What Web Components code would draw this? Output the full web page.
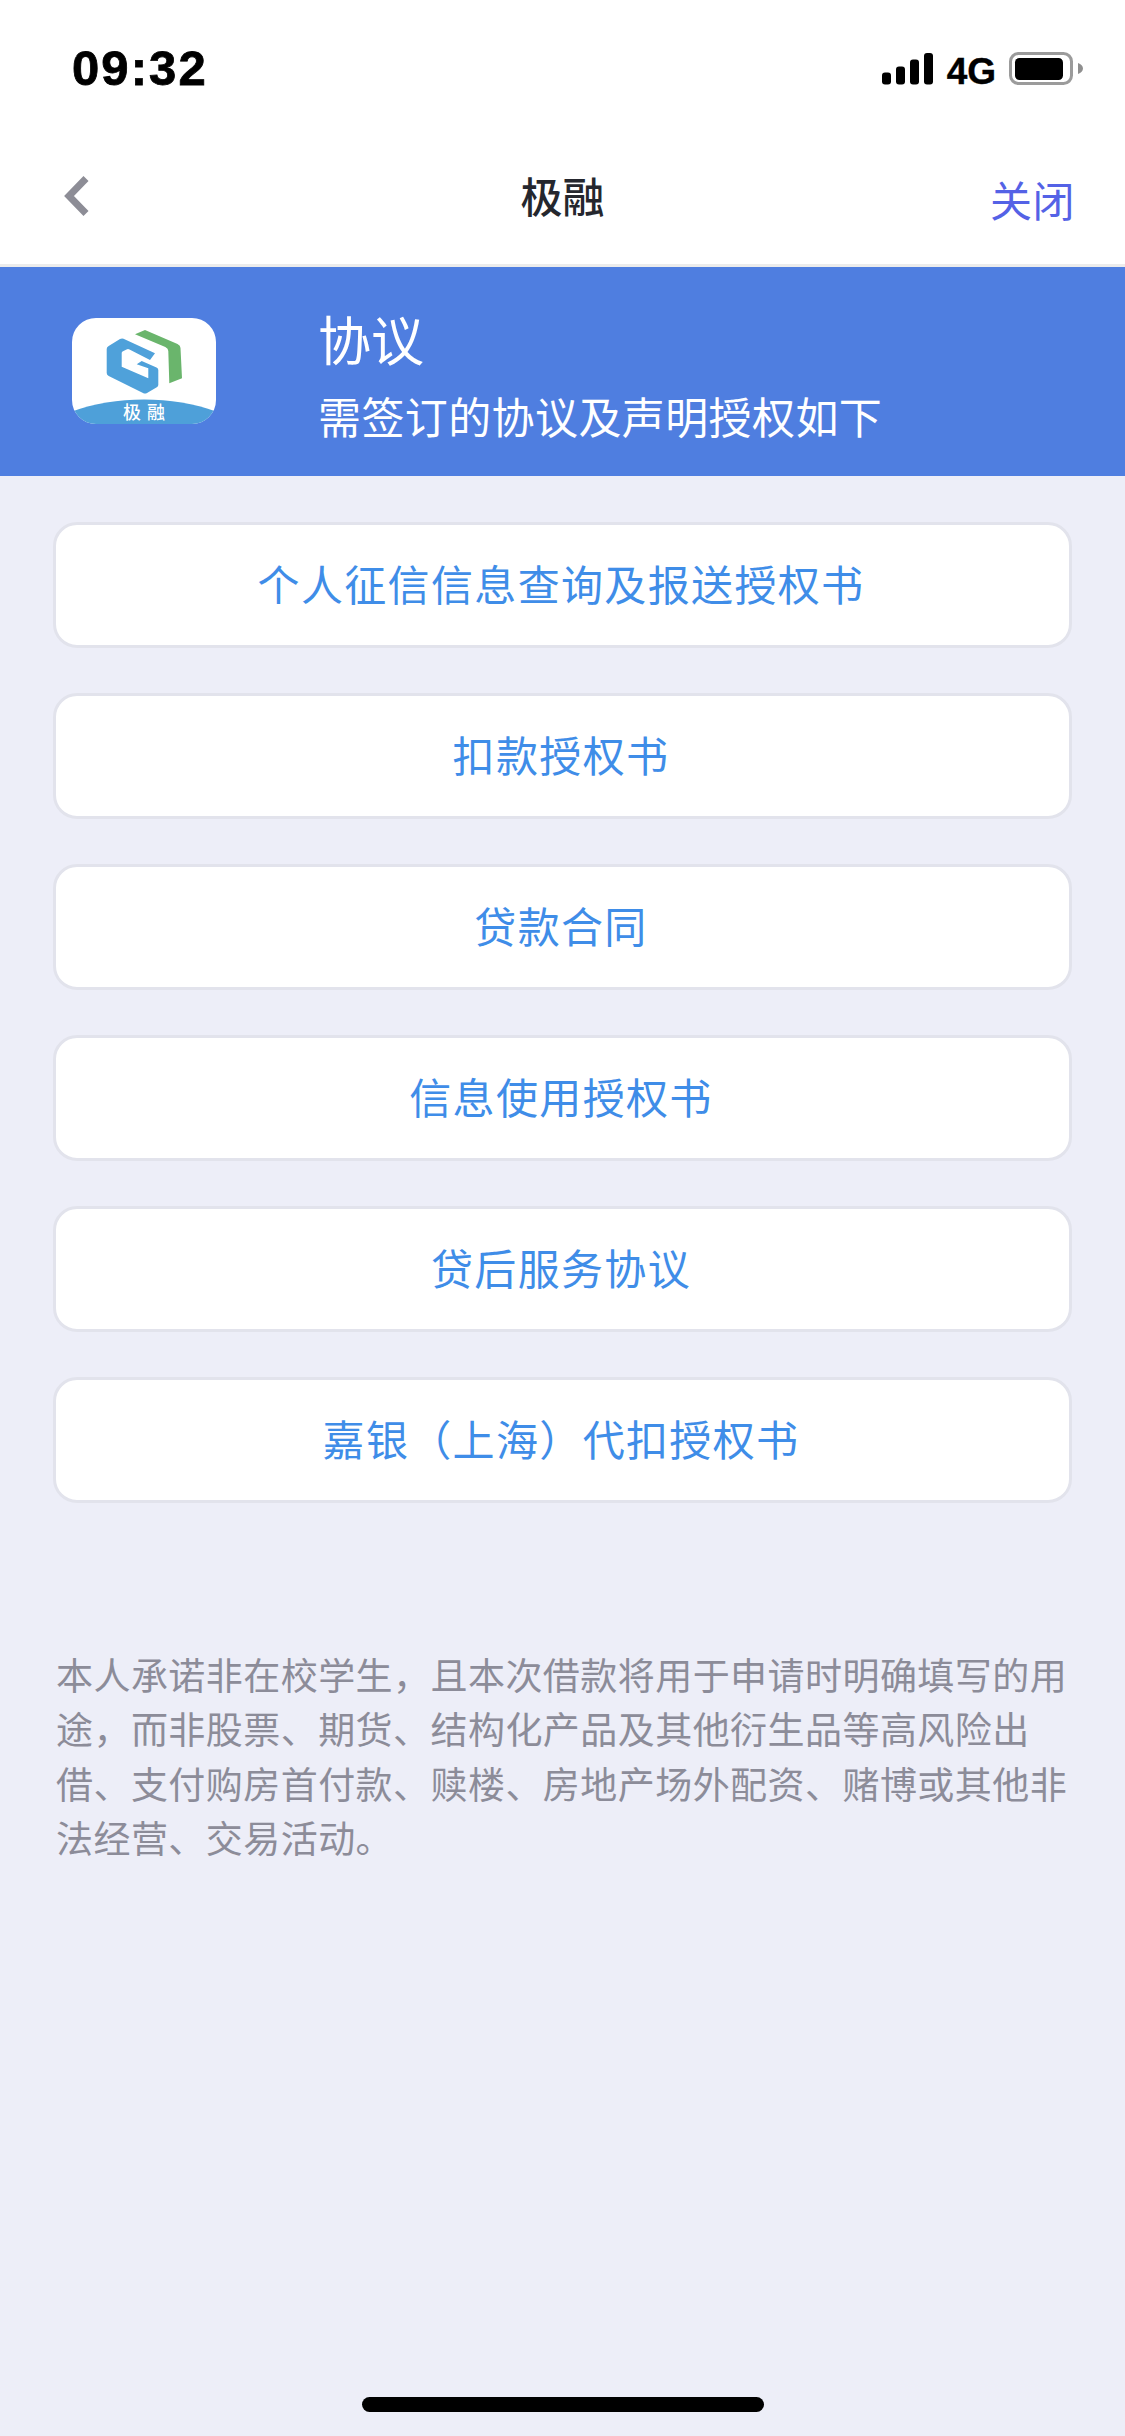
<!DOCTYPE html>
<html lang="zh-CN"><head><meta charset="utf-8">
<style>
html,body{margin:0;padding:0;background:#edeef8}
body{font-family:"Noto Sans CJK SC","Liberation Sans",sans-serif;width:1125px;height:2436px;overflow:hidden}
app-page{display:flex}
</style></head>
<body>
<app-page>
  <status-bar></status-bar>
  <nav-bar></nav-bar>
  <agreement-banner></agreement-banner>
  <doc-list>
    <doc-button>个人征信信息查询及报送授权书</doc-button>
    <doc-button>扣款授权书</doc-button>
    <doc-button>贷款合同</doc-button>
    <doc-button>信息使用授权书</doc-button>
    <doc-button>贷后服务协议</doc-button>
    <doc-button>嘉银（上海）代扣授权书</doc-button>
  </doc-list>
  <notice-text>本人承诺非在校学生，且本次借款将用于申请时明确填写的用途，而非股票、期货、结构化产品及其他衍生品等高风险出借、支付购房首付款、赎楼、房地产场外配资、赌博或其他非法经营、交易活动。</notice-text>
  <home-indicator></home-indicator>
</app-page>
<script>
function def(name, html){
  customElements.define(name, class extends HTMLElement{
    constructor(){super();this.attachShadow({mode:"open"}).innerHTML=html;}
  });
}
def("app-page",`<style>:host{display:flex;flex-direction:column;width:1125px;height:2436px}</style><slot></slot>`);
def("status-bar",`<style>
:host{display:flex;box-sizing:border-box;height:132px;background:#fff;padding:0 42px 0 72px;align-items:flex-start;justify-content:space-between}
.t{font:700 49px/1 "Liberation Sans",sans-serif;color:#000;margin-top:44px;letter-spacing:2.100px;-webkit-text-stroke:.8px #000}
.r{display:flex;align-items:flex-start;margin-top:52px}
.n{font:700 37px/1 "Liberation Sans",sans-serif;color:#000;margin:1px 13px 0 14px;-webkit-text-stroke:.4px #000}
svg{display:block}
</style>
<span class="t">09:32</span>
<div class="r">
<svg width="51" height="33" viewBox="0 0 51 33"><rect x="0" y="20.500" width="9" height="12" rx="3"/><rect x="14" y="14.500" width="9" height="18" rx="3"/><rect x="28" y="7.500" width="9" height="25" rx="3"/><rect x="42" y="1" width="9" height="31.500" rx="3"/></svg>
<span class="n">4G</span>
<svg width="74" height="34" viewBox="0 0 74 34"><rect x="1.500" y="1.500" width="61" height="30" rx="8" fill="none" stroke="#9b9b9b" stroke-width="3"/><rect x="6" y="6" width="48" height="22" rx="4.500"/><path d="M69 11v11c3-1 5-3 5-5.500s-2-4.500-5-5.500z" fill="#8f8f8f"/></svg>
</div>`);
def("nav-bar",`<style>
:host{display:flex;box-sizing:border-box;height:135px;background:#fff;border-bottom:3px solid #ececec;padding:0 50px 0 64px;align-items:center;justify-content:space-between;position:relative}
svg{display:block;margin-top:-5px}
h1{position:absolute;left:0;right:0;top:33px;margin:0;text-align:center;font:500 42px/60px "Noto Sans CJK SC",sans-serif;color:#25272e}
a{font:400 42px/60px "Noto Sans CJK SC",sans-serif;color:#5462e6;margin-top:2px;letter-spacing:.5px}
</style>
<svg width="26" height="42" viewBox="0 0 26 42"><path d="M22 3.500 5 21l17 17.500" fill="none" stroke="#8d8d96" stroke-width="7"/></svg>
<h1>极融</h1><a>关闭</a>`);
def("agreement-banner",`<style>
:host{display:flex;box-sizing:border-box;height:209px;background:#4f7ee0;color:#fff;padding:0 0 0 72px}
svg{display:block;margin-top:51px;flex:none}
.c{margin-left:102px;display:flex;flex-direction:column}
.a{font:400 53px/64px "Noto Sans CJK SC",sans-serif;margin-top:39px}
.b{font:400 43px/60px "Noto Sans CJK SC",sans-serif;margin-top:15px;letter-spacing:.4px}
</style>
<svg width="144" height="106" viewBox="0 0 144 106">
<defs><clipPath id="cl"><rect width="144" height="106" rx="24"/></clipPath></defs>
<g clip-path="url(#cl)"><rect width="144" height="106" fill="#fff"/>
<path d="M-4 95C40 77 104 77 148 95v20H-4z" fill="#4ea0d9"/>
<text x="75" y="100.500" text-anchor="middle" font-family="Noto Sans CJK SC" font-size="18" font-weight="500" fill="#fff" letter-spacing="6">极融</text></g>
<path d="M63 16.300 73 12 105.500 26q3 1.300 3 4L110 60.300 97.300 65.300 96.300 33q0-2.500-3-4z" fill="#6ab56c"/>
<path d="M34.700 31q0-2 2-3L48 21q1.700-1 3.500-.3L83 35.300 78 42 57.500 31.500q-1.500-.8-3 0L50.500 33.500q-.8.500-.8 1.500V48.700L76.300 60.300V50.300L64.700 46.300 69.700 43 84.500 49.500q1.800.8 1.800 2.500V67q0 1.500-1.500 2.300L75 75q-2 1-4 0L36.700 58q-2-1-2-3z" fill="#4fa1da"/>
</svg>
<div class="c"><span class="a">协议</span><span class="b">需签订的协议及声明授权如下</span></div>`);
def("doc-list",`<style>:host{display:flex;flex-direction:column;gap:45px;padding:46px 53px 0}</style><slot></slot>`);
def("doc-button",`<style>
:host{display:flex;box-sizing:border-box;height:126px;padding:0 3px 5px 0;align-items:center;justify-content:center;background:#fff;border:3px solid #e2e3ec;border-radius:24px;color:#3f8de8;font:400 42px/60px "Noto Sans CJK SC",sans-serif;letter-spacing:1.350px}
</style><slot></slot>`);
def("notice-text",`<style>
:host{display:block;box-sizing:border-box;margin-top:144px;padding:0 46px 0 56px;color:#8c8c99;font:400 37px/54.300px "Noto Sans CJK SC",sans-serif;letter-spacing:.45px;height:218px}
</style><slot></slot>`);
def("home-indicator",`<style>
:host{display:flex;justify-content:center;margin-top:auto;padding-bottom:24px}
i{display:block;width:402px;height:15px;border-radius:8px;background:#000}
</style><i></i>`);
</script>
</body></html>
